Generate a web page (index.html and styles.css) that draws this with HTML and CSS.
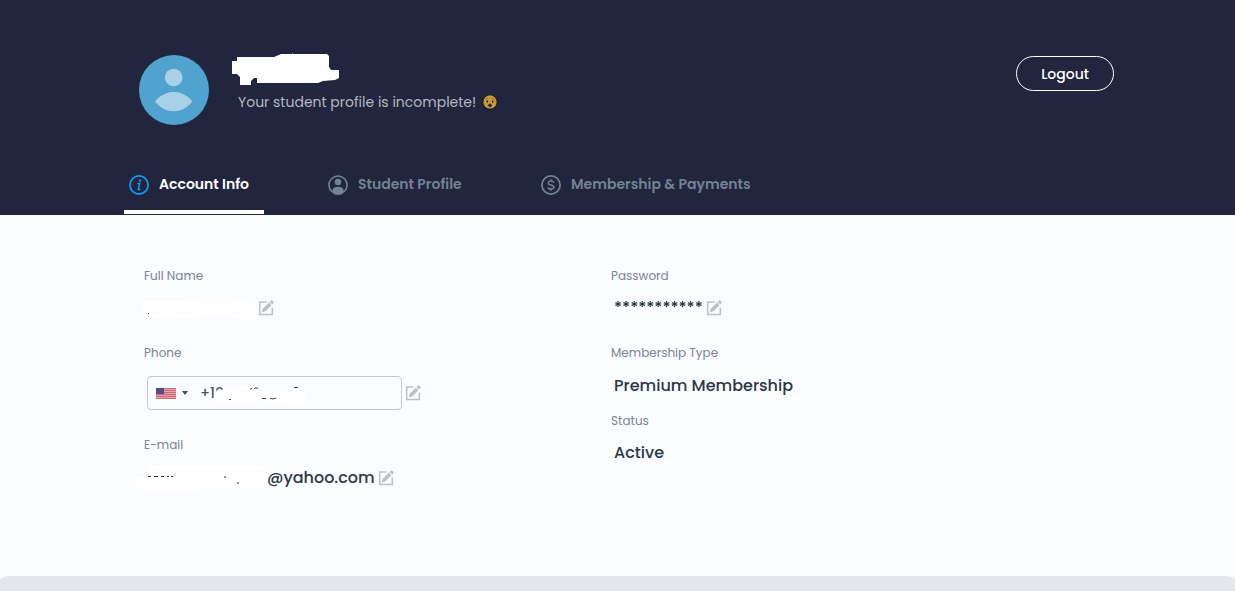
FILE: index.html
```html
<!DOCTYPE html>
<html lang="en">
<head>
<meta charset="utf-8">
<meta name="viewport" content="width=device-width, initial-scale=1">
<title>Account Info</title>
<link rel="stylesheet" href="styles.css">
</head>
<body>
<svg class="sprite" aria-hidden="true">
  <symbol id="edit" viewBox="0 0 16 16">
    <path d="M8.5 2H1.7v12.5h12.6V7.5" fill="none" stroke="currentColor" stroke-width="1.5"/>
    <path d="M3.9 12.2 4.6 8.9 10.9 2.6 13.5 5.2 7.2 11.5ZM11.6 1.9 13.1.5Q13.6 0 14.1.5L15.6 2Q16 2.5 15.5 3L14.2 4.4Z" fill="currentColor"/>
  </symbol>
</svg>
<header class="header">
  <div class="profile">
    <svg class="avatar" viewBox="0 0 70 70" role="img" aria-label="Profile picture">
      <circle cx="35" cy="35" r="35" fill="#50a3cf"/>
      <circle cx="34.700" cy="22.500" r="8.800" fill="#a8d1e7"/>
      <path d="M16 46.500C22 39.500 28 37 34.700 37S47.500 39.500 53.500 46.500C47.500 53.500 41.500 56.200 34.700 56.200S22 53.500 16 46.500Z" fill="#a8d1e7"/>
    </svg>
    <div class="identity">
      <svg class="name-mask" viewBox="0 0 107 33" aria-hidden="true">
        <path d="M5 4H42L49 1H60V0L61 1H95L97 3V14L99 17H107V25L103 27L91 28L86 30H25V25H22L19 28V32H8V24L5 21H0V8H5Z" fill="#fff"/>
      </svg>
      <p class="notice">Your student profile is incomplete!
        <svg class="emoji" viewBox="0 0 16 16" aria-hidden="true">
          <circle cx="8" cy="8" r="7.200" fill="#c29a3c" stroke="#171620" stroke-width="1"/>
          <path d="M3.500 5.200 6 3.900M10 3.900 12.500 5.200" stroke="#8a6a2e" stroke-width="1"/>
          <ellipse cx="5.300" cy="7.500" rx=".8" ry="1.200" fill="#33271c"/>
          <ellipse cx="10.700" cy="7.500" rx=".8" ry="1.200" fill="#33271c"/>
          <ellipse cx="8" cy="11.300" rx="1.700" ry="1.900" fill="#33271c"/>
        </svg>
      </p>
    </div>
    <button class="logout" type="button">Logout</button>
  </div>
  <nav class="tabs">
    <a class="tab tab-active" href="#account" aria-current="page">
      <svg class="tab-icon" viewBox="0 0 20 20" aria-hidden="true">
        <circle cx="10" cy="10" r="9.100" fill="none" stroke="#0a9df5" stroke-width="1.700"/>
        <circle cx="11" cy="5.600" r="1.200" fill="#0a9df5"/>
        <path d="M8.300 8.500H10.700L9.200 14.300Q9.100 15 11.300 14.300" fill="none" stroke="#0a9df5" stroke-width="1.500"/>
      </svg>
      <span class="tab-text">Account Info</span></a>
    <a class="tab" href="#student">
      <svg class="tab-icon" viewBox="0 0 20 20" aria-hidden="true">
        <path d="M3.800 16.800A9.100 9.100 0 1 1 16.200 16.800" fill="none" stroke="currentColor" stroke-width="1.500"/>
        <circle cx="10" cy="7" r="3.300" fill="currentColor"/>
        <path d="M4 17.500Q3.800 11.700 10 11.700T16 17.500Q13.500 20 10 20T4 17.500Z" fill="currentColor"/>
      </svg>
      <span class="tab-text">Student Profile</span></a>
    <a class="tab" href="#payments">
      <svg class="tab-icon" viewBox="0 0 20 20" aria-hidden="true">
        <circle cx="10" cy="10" r="9.100" fill="none" stroke="currentColor" stroke-width="1.700"/>
        <path d="M12.800 7.700Q12.500 6 10 6T7.300 8Q7.300 9.500 10 10T12.800 12Q12.800 14 10 14T7.200 12.200M10 4.300V6M10 14V15.700" fill="none" stroke="currentColor" stroke-width="1.500"/>
      </svg>
      <span class="tab-text">Membership &amp; Payments</span></a>
  </nav>
</header>
<main class="account" id="account">
  <section class="column">
    <div class="field">
      <h2 class="label">Full Name</h2>
      <div class="value">
        <svg class="text-mask" viewBox="0 0 116 24" aria-hidden="true">
          <path d="M2 6H42L64 4H94L103 7H116V24H104L92 19H62L42 21H7V18L0 15V7Z" fill="#fff"/>
          <path d="M7 17h1v1h-1z" fill="#29303c"/>
        </svg>
        <button class="edit edit-flush" type="button" aria-label="Edit full name"><svg class="edit-icon"><use href="#edit"/></svg></button>
      </div>
    </div>
    <div class="field">
      <label class="label" for="phone">Phone</label>
      <div class="phone-row">
        <div class="phone-box">
          <button class="country" type="button" aria-label="Country: United States">
            <svg class="flag" viewBox="0 0 20 11" aria-hidden="true">
              <path fill="#e4a6ad" d="M0 0h20v11H0z"/>
              <path d="M0 .5h20M0 2.500h20M0 4.500h20M0 6.500h20M0 8.500h20M0 10.500h20" stroke="#cf6475"/>
              <path fill="#514f83" d="M0 0h8v6H0z"/>
            </svg>
            <svg class="caret" viewBox="0 0 6 4" aria-hidden="true"><path d="M0 0h6L3 4Z" fill="#464b52"/></svg>
          </button>
          <input class="phone" id="phone" type="tel" value="+18">
          <svg class="phone-mask" viewBox="0 0 92 20" aria-hidden="true">
            <path d="M3 4L35 2L52 6H84L92 8V15L88 18H65L48 14L34 17H0L1 8Z" fill="#fff"/>
            <path d="M36 3.500 38 2M40 2.500Q42 1 44 2.500M80 1.500H84M48 12.500H52M56 12Q59 14 62 12M15 13.500H17" fill="none" stroke="#3c434c"/>
          </svg>
        </div>
        <button class="edit edit-phone" type="button" aria-label="Edit phone"><svg class="edit-icon"><use href="#edit"/></svg></button>
      </div>
    </div>
    <div class="field field-email">
      <h2 class="label">E-mail</h2>
      <div class="value value-low">
        <svg class="email-mask" viewBox="0 0 131 30" aria-hidden="true">
          <path d="M12 3H120L130 7V24H70L61 28H8L0 24V15H12Z" fill="#fff"/>
          <path d="M12 13.500H15M18 13.500H22M25 13.500H28M31 13.500H33M35 13.500H37M89 13V15M102 19V21" stroke="#29303c"/>
        </svg>
        <span>@yahoo.com</span>
        <button class="edit" type="button" aria-label="Edit e-mail"><svg class="edit-icon"><use href="#edit"/></svg></button>
      </div>
    </div>
  </section>
  <section class="column">
    <div class="field">
      <h2 class="label">Password</h2>
      <div class="value indent">
        <span class="password">***********</span>
        <button class="edit" type="button" aria-label="Edit password"><svg class="edit-icon"><use href="#edit"/></svg></button>
      </div>
    </div>
    <div class="field">
      <h2 class="label">Membership Type</h2>
      <p class="value value-low indent">Premium Membership</p>
    </div>
    <div class="field field-close">
      <h2 class="label">Status</h2>
      <p class="value indent">Active</p>
    </div>
  </section>
</main>
<footer class="footer"></footer>
</body>
</html>
```
FILE: styles.css
```css
* { box-sizing: border-box; margin: 0; padding: 0; }
body {
  min-height: 100vh;
  display: flex;
  flex-direction: column;
  background: #fbfcff;
  color: #293845;
  font-family: Poppins, Inter, "Open Sans", sans-serif;
}
button { border: 0; background: none; font: inherit; color: inherit; cursor: pointer; }
svg { display: block; flex: none; }
.sprite { position: absolute; width: 0; height: 0; }

.header { padding: 53px 121px 1px 124px; background: #21253d; color: #fff; }
.profile { display: flex; align-items: flex-start; padding-left: 15px; }
.avatar { width: 70px; height: 70px; margin-top: 2px; }
.identity { flex: 1; margin-left: 23px; }
.name-mask { width: 107px; height: 33px; }
.notice {
  display: flex;
  align-items: center;
  gap: 6px;
  margin: 6px 0 0 6px;
  color: #b5b7c1;
  font-size: 14px;
  line-height: 20px;
}
.emoji { width: 16px; height: 16px; }
.logout {
  margin-top: 3px;
  padding: 1px 24px 0;
  border: 1px solid #fff;
  border-radius: 18px;
  font-size: 14px;
  font-weight: 500;
  line-height: 32px;
}
.tabs { display: grid; grid-template-columns: 140px 154px auto; gap: 59px; margin-top: 33px; }
.tab {
  display: flex;
  align-items: center;
  gap: 10px;
  height: 56px;
  padding: 2px 0 0 5px;
  border-bottom: 4px solid transparent;
  color: #738394;
  font-size: 14px;
  font-weight: 600;
  white-space: nowrap;
  text-decoration: none;
}
.tab-text { padding-bottom: 2px; }
.tab-active { border-color: #fff; color: #fff; }
.tab-icon { width: 20px; height: 20px; }

.account { display: grid; grid-template-columns: 467px 1fr; padding: 51px 121px 86px 144px; }
.column { display: flex; flex-direction: column; gap: 23px; }
.field-email { margin-top: 2px; }
.field-close { margin-top: -10px; }
.label { display: block; color: #788590; font-size: 12px; font-weight: 400; line-height: 20px; }
.value {
  display: flex;
  align-items: center;
  height: 24px;
  margin-top: 10px;
  font-size: 16px;
  font-weight: 500;
  line-height: 24px;
}
.value-low { margin-top: 11px; }
.indent { padding-left: 3px; }
.edit { margin-left: 3px; color: #b9c0c9; }
.edit-flush { margin-left: 1px; }
.edit-icon { width: 16px; height: 16px; }
.text-mask { width: 116px; height: 24px; margin-left: -3px; }
.email-mask { width: 131px; height: 30px; margin-left: -8px; }
.phone-row { display: flex; align-items: center; margin-top: 13px; padding-left: 3px; }
.phone-box {
  position: relative;
  display: flex;
  align-items: center;
  width: 255px;
  height: 34px;
  border: 1px solid #c6c9cf;
  border-radius: 4px;
}
.country { display: flex; align-items: center; gap: 6px; padding-left: 8px; }
.flag { width: 20px; height: 11px; }
.caret { width: 6px; height: 4px; }
.phone {
  flex: 1;
  min-width: 0;
  margin-left: 12px;
  border: 0;
  background: none;
  color: #4b535c;
  font: inherit;
  font-size: 14px;
  font-weight: 500;
}
.phone-mask { position: absolute; left: 66px; top: 9px; width: 92px; height: 20px; }
.footer { flex: 1; min-height: 15px; background: #e5e5ee; border-radius: 10px 10px 0 0 / 4px 4px 0 0; }
```
